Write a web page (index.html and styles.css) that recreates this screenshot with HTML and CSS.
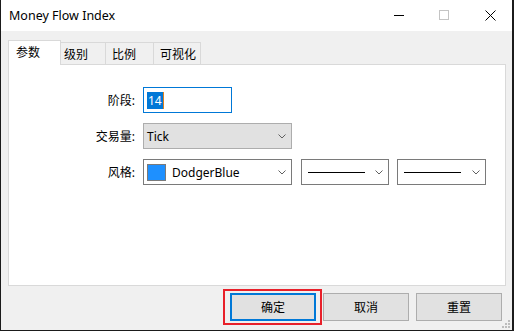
FILE: index.html
```html
<!DOCTYPE html>
<html>
<head>
<meta charset="utf-8">
<link rel="stylesheet" href="styles.css">
</head>
<body>
<div class="win">
  <div class="titlebar">
    <div class="title">Money Flow Index</div>
    <div class="controls">
      <span class="ctl min"><svg width="10" height="10" viewBox="0 0 10 10"><line x1="0" y1="5.5" x2="10" y2="5.5" stroke="#000" stroke-width="1"/></svg></span>
      <span class="ctl max"><svg width="10" height="10" viewBox="0 0 10 10"><rect x="0.5" y="0.5" width="9" height="9" fill="none" stroke="#c4c4c4" stroke-width="1"/></svg></span>
      <span class="ctl close"><svg width="11" height="11" viewBox="0 0 11 11"><path d="M0.5 0.5 L10.5 10.5 M10.5 0.5 L0.5 10.5" stroke="#000" stroke-width="1" fill="none"/></svg></span>
    </div>
  </div>
  <div class="content">
    <div class="tabs">
      <div class="tab active">参数</div>
      <div class="tab">级别</div>
      <div class="tab">比例</div>
      <div class="tab">可视化</div>
    </div>
    <div class="panel">
      <div class="form">
        <div class="label">阶段:</div>
        <div class="ctrls"><div class="input"><span class="sel">14</span><span class="caret"></span></div></div>
        <div class="label">交易量:</div>
        <div class="ctrls"><div class="select gray w149"><span class="val">Tick</span><svg class="chev" width="8" height="5" viewBox="0 0 8 5"><polyline points="0.5,0.5 4,4 7.5,0.5" fill="none" stroke="#606060" stroke-width="1"/></svg></div></div>
        <div class="label">风格:</div>
        <div class="ctrls">
          <div class="select white w149"><span class="swatch"></span><span class="val dodger">DodgerBlue</span><svg class="chev" width="8" height="5" viewBox="0 0 8 5"><polyline points="0.5,0.5 4,4 7.5,0.5" fill="none" stroke="#606060" stroke-width="1"/></svg></div>
          <div class="select white w88 gap9"><span class="line"></span><svg class="chev" width="8" height="5" viewBox="0 0 8 5"><polyline points="0.5,0.5 4,4 7.5,0.5" fill="none" stroke="#606060" stroke-width="1"/></svg></div>
          <div class="select white w89 gap8"><span class="line"></span><svg class="chev" width="8" height="5" viewBox="0 0 8 5"><polyline points="0.5,0.5 4,4 7.5,0.5" fill="none" stroke="#606060" stroke-width="1"/></svg></div>
        </div>
      </div>
    </div>
  </div>
  <div class="buttons">
    <div class="btn ok">确定<span class="highlight"></span></div>
    <div class="btn">取消</div>
    <div class="btn">重置</div>
  </div>
  <svg class="grip" width="9" height="9" viewBox="0 0 9 9">
    <rect x="6" y="0" width="2" height="2" fill="#bcbcbc"/>
    <rect x="3" y="3" width="2" height="2" fill="#bcbcbc"/>
    <rect x="6" y="3" width="2" height="2" fill="#bcbcbc"/>
    <rect x="0" y="6" width="2" height="2" fill="#bcbcbc"/>
    <rect x="3" y="6" width="2" height="2" fill="#bcbcbc"/>
    <rect x="6" y="6" width="2" height="2" fill="#bcbcbc"/>
  </svg>
</div>
</body>
</html>
```

FILE: styles.css
```css
html, body {
  margin: 0;
  padding: 0;
  background: #1b1b1b;
}
body {
  width: 514px;
  height: 331px;
  overflow: hidden;
  font-family: "Noto Sans", "Noto Sans CJK SC", sans-serif;
  font-size: 12px;
  color: #000;
}
.win {
  position: relative;
  margin-left: 1px;
  width: 511px;
  height: 330px;
  background: #f0f0f0;
  display: flex;
  flex-direction: column;
}
.titlebar {
  height: 31px;
  background: #fff;
  display: flex;
  align-items: center;
  justify-content: space-between;
}
.title {
  padding-left: 8px;
  font-size: 12.5px;
  padding-bottom: 1px;
}
.controls {
  display: flex;
  align-items: center;
  height: 31px;
}
.ctl {
  display: flex;
  align-items: center;
  justify-content: center;
  height: 31px;
}
.ctl svg { display: block; }
.min { width: 10px; margin-right: 35px; margin-top: -1px; }
.max { width: 10px; margin-right: 36px; margin-top: -1px; }
.close { width: 11px; margin-right: 16px; margin-top: -1px; }

.content {
  padding: 9px 6px 0 7px;
}
.tabs {
  display: flex;
  height: 24px;
  align-items: flex-end;
  position: relative;
  z-index: 1;
}
.tab {
  box-sizing: border-box;
  height: 22px;
  border: 1px solid #d9d9d9;
  border-bottom: none;
  border-left: none;
  background: #f0f0f0;
  display: flex;
  align-items: center;
  padding-left: 3px;
  width: 48px;
}
.tab.active {
  height: 25px;
  margin-bottom: -1px;
  background: #fff;
  border-left: 1px solid #d9d9d9;
  width: 53px;
  padding-left: 7px;
  padding-bottom: 2px;
}
.tab:nth-child(2) { width: 45px; padding-left: 3px; }
.tab:nth-child(3) { width: 48px; padding-left: 6px; }
.tab:nth-child(4) { width: 47px; padding-left: 6px; }
.panel {
  box-sizing: border-box;
  height: 222px;
  background: #fff;
  border: 1px solid #d9d9d9;
}
.form {
  display: grid;
  grid-template-columns: 126px auto;
  column-gap: 8px;
  row-gap: 10px;
  padding-top: 22px;
  align-items: center;
}
.label {
  text-align: right;
}
.ctrls {
  display: flex;
  align-items: center;
}
.input {
  box-sizing: border-box;
  width: 89px;
  height: 26px;
  border: 1px solid #0078d7;
  background: #fff;
  display: flex;
  align-items: center;
  padding-left: 3px;
}
.sel {
  background: #0078d7;
  color: #fff;
  line-height: 17px;
  padding: 0 1px;
}
.caret {
  width: 1px;
  height: 17px;
  background: #e0801c;
}
.select {
  box-sizing: border-box;
  height: 26px;
  display: flex;
  align-items: center;
  position: relative;
  padding-left: 3px;
}
.select.gray {
  background: #e1e1e1;
  border: 1px solid #adadad;
}
.select.white {
  background: #fff;
  border: 1px solid #7a7a7a;
}
.w149 { width: 149px; }
.w88 { width: 88px; }
.w89 { width: 89px; }
.gap9 { margin-left: 9px; }
.gap8 { margin-left: 8px; }
.chev {
  position: absolute;
  right: 5px;
  top: 10px;
}
.swatch {
  box-sizing: border-box;
  width: 19px;
  height: 17px;
  border: 1px solid #7a7a7a;
  background: #1e90ff;
  margin-right: 6px;
}
.line {
  display: block;
  width: 57px;
  height: 1px;
  background: #000;
  margin-left: 3px;
}
.buttons {
  display: flex;
  justify-content: flex-end;
  gap: 7px;
  padding-top: 7px;
  padding-right: 10px;
}
.btn {
  box-sizing: border-box;
  width: 86px;
  height: 28px;
  background: #e1e1e1;
  border: 1px solid #adadad;
  display: flex;
  align-items: center;
  justify-content: center;
  position: relative;
}
.btn.ok {
  border: 2px solid #0078d7;
}
.highlight {
  position: absolute;
  left: -9px;
  right: -8px;
  top: -6px;
  bottom: -6px;
  border: 2px solid #e8202a;
}
.grip {
  position: absolute;
  right: 1px;
  bottom: 1px;
}
```
